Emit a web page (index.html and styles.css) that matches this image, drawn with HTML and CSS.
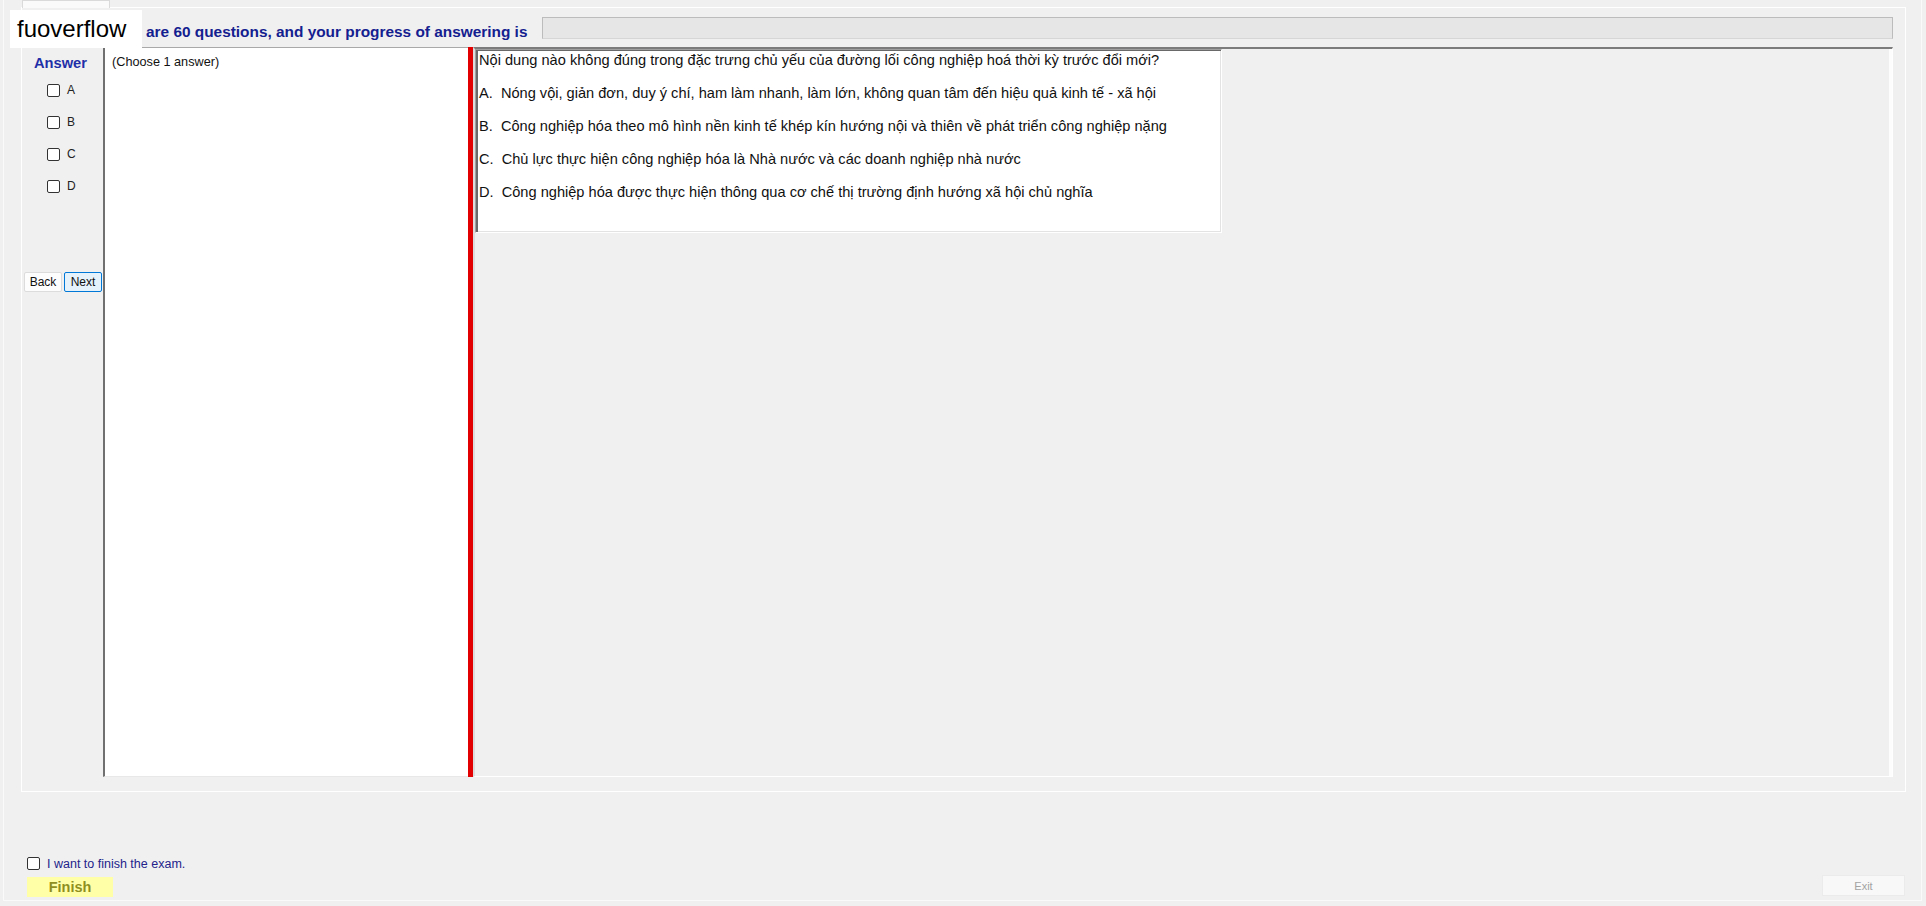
FILE: index.html
```html
<!DOCTYPE html>
<html lang="vi">
<head>
    <meta charset="UTF-8">
    <meta name="viewport" content="width=device-width, initial-scale=1.0">
    <title>Exam</title>
    <link rel="stylesheet" href="styles.css">
</head>
<body>
    <div class="window">
        <div class="tabstrip">
            <div class="tab"></div>
        </div>
        <div class="tabpage">
            <div class="topbar">
                <div class="progress-label">are 60 questions, and your progress of answering is</div>
                <div class="progress"></div>
            </div>
            <div class="workspace">
                <div class="answer-col">
                    <div class="answer-title">Answer</div>
                    <div class="opt-list">
                        <label class="opt"><span class="cb"></span>A</label>
                        <label class="opt"><span class="cb"></span>B</label>
                        <label class="opt"><span class="cb"></span>C</label>
                        <label class="opt"><span class="cb"></span>D</label>
                    </div>
                    <div class="nav">
                        <button class="btn">Back</button>
                        <button class="btn next">Next</button>
                    </div>
                </div>
                <div class="choose-box">(Choose 1 answer)</div>
                <div class="splitter"></div>
                <div class="question-panel">
                    <div class="question-box">
                        <p>Nội dung nào không đúng trong đặc trưng chủ yếu của đường lối công nghiệp hoá thời kỳ trước đổi mới?</p>
                        <p>A.  Nóng vội, giản đơn, duy ý chí, ham làm nhanh, làm lớn, không quan tâm đến hiệu quả kinh tế - xã hội</p>
                        <p>B.  Công nghiệp hóa theo mô hình nền kinh tế khép kín hướng nội và thiên về phát triển công nghiệp nặng</p>
                        <p>C.  Chủ lực thực hiện công nghiệp hóa là Nhà nước và các doanh nghiệp nhà nước</p>
                        <p>D.  Công nghiệp hóa được thực hiện thông qua cơ chế thị trường định hướng xã hội chủ nghĩa</p>
                    </div>
                </div>
            </div>
        </div>
        <div class="footer">
            <div class="finish-group">
                <label class="finish-check"><span class="cb"></span>I want to finish the exam.</label>
                <button class="finish">Finish</button>
            </div>
            <button class="exit">Exit</button>
        </div>
    </div>
    <div class="watermark">fuoverflow</div>
</body>
</html>
```
FILE: styles.css
```css
* {
    box-sizing: border-box;
}
body {
    margin: 0;
    background: #f0f0f0;
    font-family: "Liberation Sans", Arial, sans-serif;
    overflow: hidden;
}
.window {
    margin-left: 3px;
    width: 1919px;
    height: 901px;
    padding: 0 15px 0 17px;
    border: 1px solid #fafafa;
    border-top: none;
}
.tabstrip {
    height: 7px;
}
.tab {
    position: relative;
    z-index: 1;
    margin-left: 1px;
    width: 88px;
    height: 8px;
    background: #fafafa;
    border: 1px solid #dadada;
    border-bottom: none;
}
.tabpage {
    height: 785px;
    border: 1px solid #fff;
}
.topbar {
    display: flex;
    align-items: flex-start;
    height: 39px;
}
.progress-label {
    margin-top: 15px;
    padding-left: 124px;
    font-size: 15.4px;
    font-weight: bold;
    line-height: 18px;
    color: #14208f;
    white-space: nowrap;
}
.progress {
    margin: 9px 12px 0 auto;
    width: 1351px;
    height: 22px;
    background: #e6e6e6;
    border: 1px solid #bcbcbc;
    border-bottom-color: #d6d6d6;
}
.workspace {
    display: flex;
    height: 730px;
}
.answer-col {
    width: 81px;
    padding-top: 8px;
}
.answer-title {
    padding-left: 12px;
    font-size: 14.67px;
    font-weight: bold;
    line-height: 16px;
    color: #1f2fa8;
}
.opt-list {
    margin-top: 3px;
    padding-left: 25px;
}
.opt {
    display: flex;
    align-items: center;
    gap: 7px;
    height: 32px;
    font-size: 12px;
    color: #222;
}
.cb {
    width: 13px;
    height: 13px;
    background: #fff;
    border: 1px solid #333;
    border-radius: 2px;
}
.nav {
    display: flex;
    gap: 2px;
    margin-top: 70px;
    padding-left: 2px;
}
.btn {
    width: 38px;
    height: 20px;
    padding: 0;
    font-family: inherit;
    font-size: 12px;
    color: #111;
    background: #fdfdfd;
    border: 1px solid #dcdcdc;
    border-radius: 2px;
}
.btn.next {
    background: #e5f1fb;
    border-color: #0078d7;
}
.choose-box {
    width: 365px;
    padding: 7px 0 0 7px;
    font-size: 12.7px;
    line-height: 14px;
    color: #111;
    background: #fff;
    border-left: 2px solid #707070;
    border-top: 1px solid #a9a9a9;
    border-bottom: 1px solid #e8e8e8;
}
.splitter {
    width: 5px;
    background: #e20000;
}
.question-panel {
    width: 1420px;
    border-top: 2px solid #7c7c7c;
    border-left: 2px solid #dcdcdc;
    border-right: 1px solid #fff;
    border-bottom: 1px solid #fff;
    box-shadow: inset -3px 0 0 #fdfdfd;
}
.question-box {
    width: 747px;
    height: 184px;
    padding: 2px 0 0 3px;
    background: #fff;
    border: 1px solid;
    border-color: #a0a0a0 #fff #fff #a0a0a0;
    box-shadow: inset 2px 1px 0 #696969, inset -1px -1px 0 #e3e3e3;
    font-size: 14.6px;
    line-height: 16.5px;
    color: #111;
}
.question-box p {
    margin: 0 0 16.5px;
    white-space: pre;
}
.footer {
    display: flex;
    justify-content: space-between;
    align-items: flex-end;
    height: 108px;
    padding-bottom: 3px;
}
.finish-group {
    display: flex;
    flex-direction: column;
    align-items: flex-start;
    gap: 7px;
    padding-left: 6px;
}
.finish-check {
    display: flex;
    align-items: center;
    gap: 7px;
    height: 13px;
    font-size: 12.5px;
    color: #23238b;
}
.finish {
    width: 86px;
    height: 20px;
    padding: 0;
    font-family: inherit;
    font-size: 14.5px;
    font-weight: bold;
    color: #8f8f1f;
    background: #ffffa8;
    border: none;
}
.exit {
    width: 83px;
    height: 21px;
    margin: 0 1px 1px 0;
    padding: 0;
    font-family: inherit;
    font-size: 11px;
    color: #a3a3a3;
    background: #f8f8f8;
    border: 1px solid #ebebeb;
}
.watermark {
    position: absolute;
    top: 10px;
    left: 10px;
    width: 132px;
    height: 38px;
    padding-left: 7px;
    background: #fff;
    font-size: 24px;
    line-height: 38px;
    color: #000;
}
```
